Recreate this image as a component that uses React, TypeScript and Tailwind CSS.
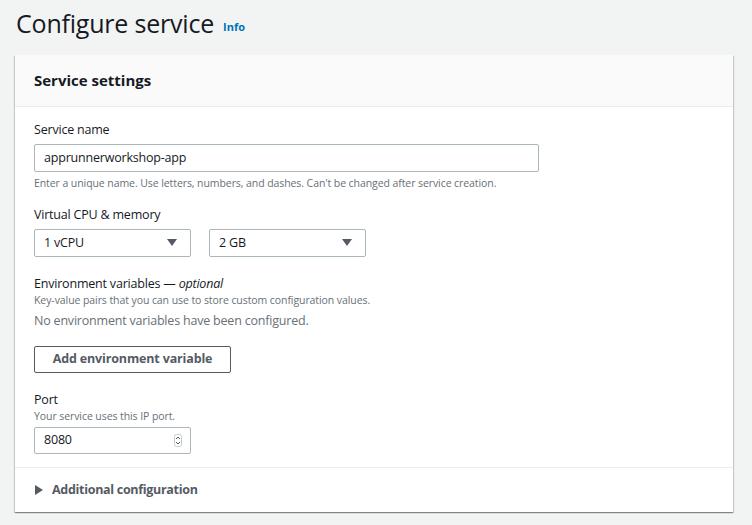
import React from "react";

function Label({ children }: { children: React.ReactNode }) {
  return <div className="text-[12.5px] leading-[18px] tracking-[-0.2px] text-[#16191f]">{children}</div>;
}

function Hint({ children }: { children: React.ReactNode }) {
  return <div className="text-[10.5px] leading-[14px] tracking-[-0.08px] text-[#687078]">{children}</div>;
}

function Select({ value }: { value: string }) {
  return (
    <div className="w-[157px] h-[28px] border border-[#aab7b8] rounded-[2px] bg-white flex items-center justify-between pl-[9px] pr-[13px]">
      <span className="text-[12.5px] tracking-[-0.2px] text-[#16191f]">{value}</span>
      <svg width="10" height="8" viewBox="0 0 10 8">
        <path d="M0 0 H10 L5 7 Z" fill="#545b64" />
      </svg>
    </div>
  );
}

export default function App() {
  return (
    <div
      className="w-[752px] h-[525px] bg-[#f2f3f3] overflow-hidden text-[#16191f]"
      style={{ fontFamily: '"Open Sans", Arial, sans-serif' }}
    >
      <div className="flex items-end pl-[16px] h-[40px]">
        <h1 className="text-[25px] leading-[34px] font-normal tracking-[-0.2px]">Configure service</h1>
        <span className="ml-[9px] mb-[5px] text-[11px] font-bold text-[#0073bb]">Info</span>
      </div>

      <div className="ml-[15px] mt-[15px] w-[718px] bg-white shadow-[0_1px_1px_0_rgba(0,28,36,0.3),1px_1px_1px_0_rgba(0,28,36,0.15),-1px_1px_1px_0_rgba(0,28,36,0.15)]">
        <div className="h-[52px] bg-[#fafafa] border-b border-[#eaeded] flex items-center px-[19px]">
          <h2 className="text-[15px] font-bold">Service settings</h2>
        </div>

        <div className="px-[19px] pt-[14px] pb-[13px] flex flex-col">
          <Label>Service name</Label>
          <div className="mt-[5px] w-[505px] h-[28px] border border-[#aab7b8] rounded-[2px] flex items-center px-[9px] text-[12.5px] tracking-[-0.2px]">
            apprunnerworkshop-app
          </div>
          <div className="mt-[4px]">
            <Hint>Enter a unique name. Use letters, numbers, and dashes. Can't be changed after service creation.</Hint>
          </div>

          <div className="mt-[16px]">
            <Label>Virtual CPU &amp; memory</Label>
          </div>
          <div className="mt-[5px] flex gap-[18px]">
            <Select value="1 vCPU" />
            <Select value="2 GB" />
          </div>

          <div className="mt-[18px]">
            <Label>
              Environment variables — <i>optional</i>
            </Label>
          </div>
          <Hint>Key-value pairs that you can use to store custom configuration values.</Hint>
          <div className="mt-[5px] text-[12.5px] leading-[18px] tracking-[-0.2px] text-[#687078]">
            No environment variables have been configured.
          </div>

          <div className="mt-[15px]">
            <button className="w-[197px] h-[27px] border border-[#545b64] rounded-[2px] bg-white text-[12.5px] tracking-[-0.15px] font-bold text-[#545b64]">
              Add environment variable
            </button>
          </div>

          <div className="mt-[18px]">
            <Label>Port</Label>
          </div>
          <Hint>Your service uses this IP port.</Hint>
          <div className="mt-[4px] w-[157px] h-[27px] border border-[#aab7b8] rounded-[2px] flex items-center justify-between pl-[9px] pr-[8px]">
            <span className="text-[12.5px] tracking-[-0.2px]">8080</span>
            <svg width="8" height="13" viewBox="0 0 8 13">
              <rect x="0.5" y="0.5" width="7" height="12" rx="2" fill="#fff" stroke="#c7cbcc" />
              <path d="M2 5 L4 3 L6 5" fill="none" stroke="#545b64" strokeWidth="1" />
              <path d="M2 8 L4 10 L6 8" fill="none" stroke="#545b64" strokeWidth="1" />
            </svg>
          </div>
        </div>

        <div className="border-t border-[#eaeded] h-[45px] flex items-center px-[20px] gap-[8px]">
          <svg width="9" height="10" viewBox="0 0 9 10">
            <path d="M0 0 L8 5 L0 10 Z" fill="#545b64" />
          </svg>
          <span className="text-[12.5px] tracking-[-0.3px] font-bold text-[#545b64]">Additional configuration</span>
        </div>
      </div>
    </div>
  );
}
